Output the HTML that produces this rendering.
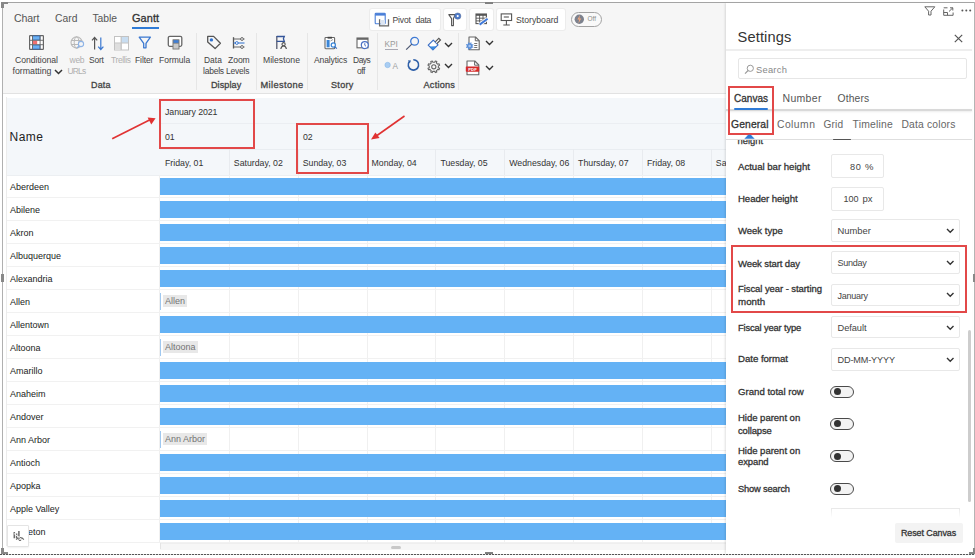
<!DOCTYPE html>
<html><head><meta charset="utf-8"><style>
html,body{margin:0;padding:0;width:975px;height:558px;overflow:hidden;background:#fff;position:relative;font-family:"Liberation Sans",sans-serif}
.t{position:absolute;white-space:nowrap;line-height:1}
svg{overflow:visible}
</style></head><body>
<div style="position:absolute;left:3px;top:3px;width:723px;height:90.5px;background:#f6f6f6"></div>
<div style="position:absolute;left:3px;top:93px;width:723px;height:1.2px;background:#e2e2e2"></div>
<div style="position:absolute;left:7px;top:97.5px;width:719px;height:77.5px;background:#f4f7fa"></div>
<div style="position:absolute;left:160px;top:122.5px;width:566px;height:1px;background:#ebeef2"></div>
<div style="position:absolute;left:160px;top:149px;width:566px;height:1px;background:#e9edf1"></div>
<div style="position:absolute;left:7px;top:174.5px;width:719px;height:1px;background:#eceff2"></div>
<div class="t" id="t0" style="left:14.00px;top:13.03px;font-size:10.592px;color:#555;font-weight:400;letter-spacing:-0.100px">Chart</div>
<div class="t" id="t1" style="left:55.00px;top:14.24px;font-size:10.344px;color:#555;font-weight:400">Card</div>
<div class="t" id="t2" style="left:92.50px;top:14.24px;font-size:10.349px;color:#555;font-weight:400;letter-spacing:-0.050px">Table</div>
<div class="t" id="t3" style="left:132.00px;top:12.74px;font-size:10.941px;color:#333;font-weight:400;-webkit-text-stroke:0.3px #333;letter-spacing:0.100px">Gantt</div>
<div style="position:absolute;left:132px;top:27px;width:27px;height:2px;background:#2f7bd6"></div>
<div class="t" id="t4" style="left:15.00px;top:56.35px;font-size:8.683px;color:#444;font-weight:400;letter-spacing:-0.040px">Conditional</div>
<div class="t" id="t5" style="left:12.50px;top:67.45px;font-size:8.803px;color:#444;font-weight:400;letter-spacing:-0.021px">formatting</div>
<div class="t" id="t6" style="left:69.54px;top:56.47px;font-size:8.546px;color:#b0b0b0;font-weight:400;letter-spacing:-0.300px">web</div>
<div class="t" id="t7" style="left:67.50px;top:66.74px;font-size:8.455px;color:#b0b0b0;font-weight:400;letter-spacing:-0.800px">URLs</div>
<div class="t" id="t8" style="left:89.00px;top:55.54px;font-size:8.455px;color:#444;font-weight:400;letter-spacing:-0.199px">Sort</div>
<div class="t" id="t9" style="left:111.00px;top:55.54px;font-size:8.455px;color:#b0b0b0;font-weight:400;letter-spacing:-0.367px">Trellis</div>
<div class="t" id="t10" style="left:135.00px;top:55.53px;font-size:8.471px;color:#444;font-weight:400;letter-spacing:-0.080px">Filter</div>
<div class="t" id="t11" style="left:159.00px;top:56.46px;font-size:8.558px;color:#444;font-weight:400;letter-spacing:-0.034px">Formula</div>
<div class="t" id="t12" style="left:91.00px;top:81.01px;font-size:8.968px;color:#444;font-weight:400;-webkit-text-stroke:0.3px #444;letter-spacing:0.200px">Data</div>
<div class="t" id="t13" style="left:204.00px;top:55.54px;font-size:8.458px;color:#444;font-weight:400">Data</div>
<div class="t" id="t14" style="left:203.00px;top:66.74px;font-size:8.455px;color:#444;font-weight:400;letter-spacing:-0.200px">labels</div>
<div class="t" id="t15" style="left:228.00px;top:56.43px;font-size:8.593px;color:#444;font-weight:400;letter-spacing:-0.066px">Zoom</div>
<div class="t" id="t16" style="left:226.00px;top:66.74px;font-size:8.455px;color:#444;font-weight:400;letter-spacing:-0.200px">Levels</div>
<div class="t" id="t17" style="left:211.00px;top:80.91px;font-size:9.088px;color:#444;font-weight:400;-webkit-text-stroke:0.3px #444;letter-spacing:0.067px">Display</div>
<div class="t" id="t18" style="left:263.00px;top:56.38px;font-size:8.652px;color:#444;font-weight:400">Milestone</div>
<div class="t" id="t19" style="left:260.50px;top:80.74px;font-size:9.285px;color:#444;font-weight:400;-webkit-text-stroke:0.3px #444;letter-spacing:0.375px">Milestone</div>
<div class="t" id="t20" style="left:314.00px;top:56.45px;font-size:8.569px;color:#444;font-weight:400;letter-spacing:-0.125px">Analytics</div>
<div class="t" id="t21" style="left:353.00px;top:55.54px;font-size:8.455px;color:#444;font-weight:400;letter-spacing:-0.467px">Days</div>
<div class="t" id="t22" style="left:357.00px;top:66.66px;font-size:8.553px;color:#444;font-weight:400;letter-spacing:-0.500px">off</div>
<div class="t" id="t23" style="left:331.00px;top:80.93px;font-size:9.061px;color:#444;font-weight:400;-webkit-text-stroke:0.3px #444;letter-spacing:0.300px">Story</div>
<div class="t" id="t24" style="left:423.50px;top:80.84px;font-size:9.163px;color:#444;font-weight:400;-webkit-text-stroke:0.3px #444;letter-spacing:0.233px">Actions</div>
<div style="position:absolute;left:196px;top:33px;width:1px;height:57px;background:#e6e6e6"></div>
<div style="position:absolute;left:256px;top:33px;width:1px;height:57px;background:#e6e6e6"></div>
<div style="position:absolute;left:307px;top:33px;width:1px;height:57px;background:#e6e6e6"></div>
<div style="position:absolute;left:377px;top:33px;width:1px;height:57px;background:#e6e6e6"></div>
<div style="position:absolute;left:458px;top:33px;width:1px;height:57px;background:#e6e6e6"></div>
<div style="position:absolute;left:370px;top:9px;width:70px;height:21px;background:#fff;border-radius:2px;box-shadow:0 0 0 1px #ececec"></div>
<div class="t" id="t25" style="left:392.50px;top:15.56px;font-size:8.556px;color:#444;font-weight:400;letter-spacing:-0.150px">Pivot</div>
<div class="t" id="t26" style="left:415.50px;top:15.53px;font-size:8.593px;color:#444;font-weight:400;letter-spacing:-0.333px">data</div>
<div style="position:absolute;left:444px;top:9px;width:22px;height:21px;background:#fff;border-radius:2px;box-shadow:0 0 0 1px #ececec"></div>
<div style="position:absolute;left:470px;top:9px;width:23px;height:21px;background:#fff;border-radius:2px;box-shadow:0 0 0 1px #ececec"></div>
<div style="position:absolute;left:497px;top:9px;width:68px;height:21px;background:#fff;border-radius:2px;box-shadow:0 0 0 1px #ececec"></div>
<div class="t" id="t27" style="left:516.00px;top:15.95px;font-size:8.687px;color:#444;font-weight:400">Storyboard</div>
<div style="position:absolute;left:571.4px;top:11.9px;width:30.7px;height:15px;border:1.3px solid #a2a2a2;border-radius:8px;background:#f9f9f9;box-sizing:border-box"></div>
<div class="t" id="t28" style="left:9.50px;top:130.83px;font-size:12.011px;color:#222;font-weight:400;letter-spacing:0.466px">Name</div>
<div class="t" id="t29" style="left:165.00px;top:107.54px;font-size:8.813px;color:#333;font-weight:400;letter-spacing:-0.074px">January 2021</div>
<div class="t" id="t30" style="left:165.00px;top:132.59px;font-size:8.750px;color:#333;font-weight:400">01</div>
<div class="t" id="t31" style="left:303.00px;top:132.59px;font-size:8.750px;color:#333;font-weight:400">02</div>
<div class="t" id="t32" style="left:165.00px;top:159.39px;font-size:8.750px;color:#333;font-weight:400">Friday, 01</div>
<div class="t" id="t33" style="left:233.85px;top:159.39px;font-size:8.750px;color:#333;font-weight:400">Saturday, 02</div>
<div style="position:absolute;left:228.85px;top:149px;width:1px;height:26px;background:#e8ebef"></div>
<div class="t" id="t34" style="left:302.70px;top:159.39px;font-size:8.750px;color:#333;font-weight:400">Sunday, 03</div>
<div style="position:absolute;left:297.7px;top:149px;width:1px;height:26px;background:#e8ebef"></div>
<div class="t" id="t35" style="left:371.55px;top:159.39px;font-size:8.750px;color:#333;font-weight:400">Monday, 04</div>
<div style="position:absolute;left:366.55px;top:149px;width:1px;height:26px;background:#e8ebef"></div>
<div class="t" id="t36" style="left:440.40px;top:159.39px;font-size:8.750px;color:#333;font-weight:400">Tuesday, 05</div>
<div style="position:absolute;left:435.4px;top:149px;width:1px;height:26px;background:#e8ebef"></div>
<div class="t" id="t37" style="left:509.25px;top:159.39px;font-size:8.750px;color:#333;font-weight:400">Wednesday, 06</div>
<div style="position:absolute;left:504.25px;top:149px;width:1px;height:26px;background:#e8ebef"></div>
<div class="t" id="t38" style="left:578.10px;top:159.39px;font-size:8.750px;color:#333;font-weight:400">Thursday, 07</div>
<div style="position:absolute;left:573.1px;top:149px;width:1px;height:26px;background:#e8ebef"></div>
<div class="t" id="t39" style="left:646.95px;top:159.39px;font-size:8.750px;color:#333;font-weight:400">Friday, 08</div>
<div style="position:absolute;left:641.95px;top:149px;width:1px;height:26px;background:#e8ebef"></div>
<div class="t" id="t40" style="left:715.80px;top:159.39px;font-size:8.750px;color:#333;font-weight:400">Saturday, 09</div>
<div style="position:absolute;left:710.8px;top:149px;width:1px;height:26px;background:#e8ebef"></div>
<div style="position:absolute;left:159px;top:175px;width:1px;height:368px;background:#f0f0f0"></div>
<div style="position:absolute;left:228.85px;top:175px;width:1px;height:368px;background:#f0f0f0"></div>
<div style="position:absolute;left:297.7px;top:175px;width:1px;height:368px;background:#f0f0f0"></div>
<div style="position:absolute;left:366.55px;top:175px;width:1px;height:368px;background:#f0f0f0"></div>
<div style="position:absolute;left:435.4px;top:175px;width:1px;height:368px;background:#f0f0f0"></div>
<div style="position:absolute;left:504.25px;top:175px;width:1px;height:368px;background:#f0f0f0"></div>
<div style="position:absolute;left:573.1px;top:175px;width:1px;height:368px;background:#f0f0f0"></div>
<div style="position:absolute;left:641.95px;top:175px;width:1px;height:368px;background:#f0f0f0"></div>
<div style="position:absolute;left:710.8px;top:175px;width:1px;height:368px;background:#f0f0f0"></div>
<div style="position:absolute;left:6px;top:197px;width:720px;height:1px;background:#f1f1f1"></div>
<div class="t" id="t41" style="left:10.00px;top:182.58px;font-size:9.000px;color:#222;font-weight:400">Aberdeen</div>
<div style="position:absolute;left:160px;top:178px;width:566px;height:17px;background:#64b2f5"></div>
<div style="position:absolute;left:6px;top:220px;width:720px;height:1px;background:#f1f1f1"></div>
<div class="t" id="t42" style="left:10.00px;top:205.58px;font-size:9.000px;color:#222;font-weight:400">Abilene</div>
<div style="position:absolute;left:160px;top:201px;width:566px;height:17px;background:#64b2f5"></div>
<div style="position:absolute;left:6px;top:243px;width:720px;height:1px;background:#f1f1f1"></div>
<div class="t" id="t43" style="left:10.00px;top:228.58px;font-size:9.000px;color:#222;font-weight:400">Akron</div>
<div style="position:absolute;left:160px;top:224px;width:566px;height:17px;background:#64b2f5"></div>
<div style="position:absolute;left:6px;top:266px;width:720px;height:1px;background:#f1f1f1"></div>
<div class="t" id="t44" style="left:10.00px;top:251.58px;font-size:9.000px;color:#222;font-weight:400">Albuquerque</div>
<div style="position:absolute;left:160px;top:247px;width:566px;height:17px;background:#64b2f5"></div>
<div style="position:absolute;left:6px;top:289px;width:720px;height:1px;background:#f1f1f1"></div>
<div class="t" id="t45" style="left:10.00px;top:274.58px;font-size:9.000px;color:#222;font-weight:400">Alexandria</div>
<div style="position:absolute;left:160px;top:270px;width:566px;height:17px;background:#64b2f5"></div>
<div style="position:absolute;left:6px;top:312px;width:720px;height:1px;background:#f1f1f1"></div>
<div class="t" id="t46" style="left:10.00px;top:297.58px;font-size:9.000px;color:#222;font-weight:400">Allen</div>
<div style="position:absolute;left:160px;top:293px;width:1px;height:17px;background:#9fc8f0"></div>
<div style="position:absolute;white-space:nowrap;left:163px;top:294.5px;font-size:9px;line-height:12.5px;padding:0 2px;background:#e8e8e8;color:#737373">Allen</div>
<div style="position:absolute;left:6px;top:335px;width:720px;height:1px;background:#f1f1f1"></div>
<div class="t" id="t47" style="left:10.00px;top:320.58px;font-size:9.000px;color:#222;font-weight:400">Allentown</div>
<div style="position:absolute;left:160px;top:316px;width:566px;height:17px;background:#64b2f5"></div>
<div style="position:absolute;left:6px;top:358px;width:720px;height:1px;background:#f1f1f1"></div>
<div class="t" id="t48" style="left:10.00px;top:343.58px;font-size:9.000px;color:#222;font-weight:400">Altoona</div>
<div style="position:absolute;left:160px;top:339px;width:1px;height:17px;background:#9fc8f0"></div>
<div style="position:absolute;white-space:nowrap;left:163px;top:340.5px;font-size:9px;line-height:12.5px;padding:0 2px;background:#e8e8e8;color:#737373">Altoona</div>
<div style="position:absolute;left:6px;top:381px;width:720px;height:1px;background:#f1f1f1"></div>
<div class="t" id="t49" style="left:10.00px;top:366.58px;font-size:9.000px;color:#222;font-weight:400">Amarillo</div>
<div style="position:absolute;left:160px;top:362px;width:566px;height:17px;background:#64b2f5"></div>
<div style="position:absolute;left:6px;top:404px;width:720px;height:1px;background:#f1f1f1"></div>
<div class="t" id="t50" style="left:10.00px;top:389.58px;font-size:9.000px;color:#222;font-weight:400">Anaheim</div>
<div style="position:absolute;left:160px;top:385px;width:566px;height:17px;background:#64b2f5"></div>
<div style="position:absolute;left:6px;top:427px;width:720px;height:1px;background:#f1f1f1"></div>
<div class="t" id="t51" style="left:10.00px;top:412.58px;font-size:9.000px;color:#222;font-weight:400">Andover</div>
<div style="position:absolute;left:160px;top:408px;width:566px;height:17px;background:#64b2f5"></div>
<div style="position:absolute;left:6px;top:450px;width:720px;height:1px;background:#f1f1f1"></div>
<div class="t" id="t52" style="left:10.00px;top:435.58px;font-size:9.000px;color:#222;font-weight:400">Ann Arbor</div>
<div style="position:absolute;left:160px;top:431px;width:1px;height:17px;background:#9fc8f0"></div>
<div style="position:absolute;white-space:nowrap;left:163px;top:432.5px;font-size:9px;line-height:12.5px;padding:0 2px;background:#e8e8e8;color:#737373">Ann Arbor</div>
<div style="position:absolute;left:6px;top:473px;width:720px;height:1px;background:#f1f1f1"></div>
<div class="t" id="t53" style="left:10.00px;top:458.58px;font-size:9.000px;color:#222;font-weight:400">Antioch</div>
<div style="position:absolute;left:160px;top:454px;width:566px;height:17px;background:#64b2f5"></div>
<div style="position:absolute;left:6px;top:496px;width:720px;height:1px;background:#f1f1f1"></div>
<div class="t" id="t54" style="left:10.00px;top:481.58px;font-size:9.000px;color:#222;font-weight:400">Apopka</div>
<div style="position:absolute;left:160px;top:477px;width:566px;height:17px;background:#64b2f5"></div>
<div style="position:absolute;left:6px;top:519px;width:720px;height:1px;background:#f1f1f1"></div>
<div class="t" id="t55" style="left:10.00px;top:504.58px;font-size:9.000px;color:#222;font-weight:400">Apple Valley</div>
<div style="position:absolute;left:160px;top:500px;width:566px;height:17px;background:#64b2f5"></div>
<div style="position:absolute;left:6px;top:542px;width:720px;height:1px;background:#f1f1f1"></div>
<div class="t" id="t56" style="left:10.00px;top:527.58px;font-size:9.000px;color:#222;font-weight:400">Appleton</div>
<div style="position:absolute;left:160px;top:523px;width:566px;height:17px;background:#64b2f5"></div>
<div style="position:absolute;left:160px;top:543px;width:566px;height:6px;background:#f6f6f6;border-top:1px solid #eeeeee"></div>
<div style="position:absolute;left:160px;top:543px;width:1px;height:6px;background:#e4e4e4"></div>
<div style="position:absolute;left:391px;top:545.5px;width:10px;height:3px;background:#c8c8c8;border-radius:2px"></div>
<div style="position:absolute;left:7.3px;top:524.5px;width:21.5px;height:22px;background:#fff;border:1px solid #e4e4e4;box-sizing:border-box;border-radius:1px;box-shadow:0 1px 2px rgba(0,0,0,.06)"></div>
<div style="position:absolute;left:726px;top:3px;width:246px;height:551px;background:#fff;box-shadow:-1px 0 2px rgba(0,0,0,.12)"></div>
<div class="t" id="t57" style="left:737.50px;top:30.40px;font-size:14.649px;color:#333;font-weight:400;letter-spacing:0.143px">Settings</div>
<div style="position:absolute;left:726px;top:49px;width:246px;height:1.5px;background:#eeeeee"></div>
<div style="position:absolute;left:738px;top:58px;width:229px;height:20.5px;border:1px solid #e6e6e6;border-radius:2px;box-sizing:border-box;background:#fff"></div>
<div class="t" id="t58" style="left:756.00px;top:65.67px;font-size:9.371px;color:#888;font-weight:400;letter-spacing:0.240px">Search</div>
<div class="t" id="t59" style="left:734.00px;top:94.33px;font-size:10.010px;color:#333;font-weight:400;-webkit-text-stroke:0.3px #333;letter-spacing:0.040px">Canvas</div>
<div class="t" id="t60" style="left:782.50px;top:93.91px;font-size:10.497px;color:#555;font-weight:400;letter-spacing:0.320px">Number</div>
<div class="t" id="t61" style="left:837.50px;top:94.08px;font-size:10.300px;color:#555;font-weight:400;letter-spacing:0.160px">Others</div>
<div style="position:absolute;left:726px;top:109px;width:246px;height:1.5px;background:#d9d9d9;box-shadow:0 1px 2px rgba(0,0,0,.08)"></div>
<div style="position:absolute;left:734px;top:108.3px;width:34px;height:2.2px;background:#2f7bd6;border-radius:1px"></div>
<div class="t" id="t62" style="left:731.00px;top:120.36px;font-size:10.324px;color:#333;font-weight:400;-webkit-text-stroke:0.3px #333;letter-spacing:0.133px">General</div>
<div class="t" id="t63" style="left:777.00px;top:120.32px;font-size:10.367px;color:#666;font-weight:400;letter-spacing:0.440px">Column</div>
<div class="t" id="t64" style="left:823.50px;top:119.51px;font-size:10.153px;color:#666;font-weight:400;letter-spacing:0.133px">Grid</div>
<div class="t" id="t65" style="left:852.50px;top:120.30px;font-size:10.392px;color:#666;font-weight:400;letter-spacing:0.201px">Timeline</div>
<div class="t" id="t66" style="left:901.50px;top:120.38px;font-size:10.307px;color:#666;font-weight:400;letter-spacing:0.180px">Data colors</div>
<div class="t" id="t67" style="left:738.00px;top:162.03px;font-size:9.656px;color:#333;font-weight:400;-webkit-text-stroke:0.3px #333;letter-spacing:-0.027px">Actual bar height</div>
<div class="t" id="t68" style="left:738.00px;top:194.26px;font-size:9.620px;color:#333;font-weight:400;-webkit-text-stroke:0.3px #333;letter-spacing:-0.066px">Header height</div>
<div class="t" id="t69" style="left:738.00px;top:225.84px;font-size:9.519px;color:#333;font-weight:400;-webkit-text-stroke:0.3px #333;letter-spacing:0.002px">Week type</div>
<div class="t" id="t70" style="left:738.00px;top:259.40px;font-size:9.566px;color:#333;font-weight:400;-webkit-text-stroke:0.3px #333;letter-spacing:-0.122px">Week start day</div>
<div class="t" id="t71" style="left:738.00px;top:284.25px;font-size:9.510px;color:#333;font-weight:400;-webkit-text-stroke:0.3px #333;letter-spacing:-0.075px">Fiscal year - starting</div>
<div class="t" id="t72" style="left:738.00px;top:297.37px;font-size:9.720px;color:#333;font-weight:400;-webkit-text-stroke:0.3px #333;letter-spacing:0.050px">month</div>
<div class="t" id="t73" style="left:738.00px;top:323.66px;font-size:9.381px;color:#333;font-weight:400;-webkit-text-stroke:0.3px #333;letter-spacing:-0.160px">Fiscal year type</div>
<div class="t" id="t74" style="left:738.00px;top:354.01px;font-size:9.674px;color:#333;font-weight:400;-webkit-text-stroke:0.3px #333;letter-spacing:-0.040px">Date format</div>
<div class="t" id="t75" style="left:738.00px;top:386.82px;font-size:9.665px;color:#333;font-weight:400;-webkit-text-stroke:0.3px #333;letter-spacing:-0.015px">Grand total row</div>
<div class="t" id="t76" style="left:738.00px;top:413.28px;font-size:9.593px;color:#333;font-weight:400;-webkit-text-stroke:0.3px #333;letter-spacing:-0.047px">Hide parent on</div>
<div class="t" id="t77" style="left:738.00px;top:425.62px;font-size:9.430px;color:#333;font-weight:400;-webkit-text-stroke:0.3px #333;letter-spacing:-0.114px">collapse</div>
<div class="t" id="t78" style="left:738.00px;top:445.78px;font-size:9.593px;color:#333;font-weight:400;-webkit-text-stroke:0.3px #333;letter-spacing:-0.047px">Hide parent on</div>
<div class="t" id="t79" style="left:738.00px;top:457.30px;font-size:9.452px;color:#333;font-weight:400;-webkit-text-stroke:0.3px #333;letter-spacing:-0.080px">expand</div>
<div class="t" id="t80" style="left:738.00px;top:484.81px;font-size:9.326px;color:#333;font-weight:400;-webkit-text-stroke:0.3px #333;letter-spacing:-0.180px">Show search</div>
<div style="position:absolute;left:831px;top:154px;width:53px;height:24px;border:1px solid #e8e8e8;box-sizing:border-box;background:#fff;border-radius:2px"></div>
<div class="t" id="t81" style="left:850.00px;top:162.91px;font-size:9.205px;color:#444;font-weight:400;letter-spacing:0.600px">80</div>
<div class="t" id="t82" style="left:865.00px;top:161.66px;font-size:9.500px;color:#444;font-weight:400">%</div>
<div style="position:absolute;left:831px;top:186.5px;width:53px;height:24px;border:1px solid #e8e8e8;box-sizing:border-box;background:#fff;border-radius:2px"></div>
<div class="t" id="t83" style="left:843.50px;top:194.66px;font-size:9.025px;color:#444;font-weight:400">100</div>
<div class="t" id="t84" style="left:862.50px;top:194.26px;font-size:9.500px;color:#444;font-weight:400">px</div>
<div style="position:absolute;left:830.6px;top:218.5px;width:129px;height:23.8px;border:1px solid #e8e8e8;box-sizing:border-box;background:#fff;border-radius:2px"></div>
<div class="t" id="t85" style="left:837.50px;top:225.95px;font-size:9.391px;color:#444;font-weight:400">Number</div>
<div style="position:absolute;left:830.6px;top:250.8px;width:129px;height:23.3px;border:1px solid #e8e8e8;box-sizing:border-box;background:#fff;border-radius:2px"></div>
<div class="t" id="t86" style="left:837.50px;top:258.72px;font-size:9.077px;color:#444;font-weight:400;letter-spacing:-0.280px">Sunday</div>
<div style="position:absolute;left:830.6px;top:283.5px;width:129px;height:22.5px;border:1px solid #e8e8e8;box-sizing:border-box;background:#fff;border-radius:2px"></div>
<div class="t" id="t87" style="left:837.50px;top:291.95px;font-size:9.036px;color:#444;font-weight:400;letter-spacing:-0.267px">January</div>
<div style="position:absolute;left:830.6px;top:316.1px;width:129px;height:22.1px;border:1px solid #e8e8e8;box-sizing:border-box;background:#fff;border-radius:2px"></div>
<div class="t" id="t88" style="left:837.50px;top:323.62px;font-size:9.306px;color:#444;font-weight:400;letter-spacing:-0.067px">Default</div>
<div style="position:absolute;left:830.6px;top:347.6px;width:129px;height:23.3px;border:1px solid #e8e8e8;box-sizing:border-box;background:#fff;border-radius:2px"></div>
<div class="t" id="t89" style="left:837.50px;top:355.95px;font-size:9.158px;color:#444;font-weight:400;letter-spacing:-0.155px">DD-MM-YYYY</div>
<div style="position:absolute;left:830.4px;top:385.5px;width:23.4px;height:12.4px;border:1.2px solid #4a4a4a;border-radius:7px;box-sizing:border-box;background:#f3f3f3"></div>
<div style="position:absolute;left:834.3px;top:388.2px;width:7px;height:7px;background:#333;border-radius:50%"></div>
<div style="position:absolute;left:830.4px;top:417.5px;width:23.4px;height:12.4px;border:1.2px solid #4a4a4a;border-radius:7px;box-sizing:border-box;background:#f3f3f3"></div>
<div style="position:absolute;left:834.3px;top:420.2px;width:7px;height:7px;background:#333;border-radius:50%"></div>
<div style="position:absolute;left:830.4px;top:449.8px;width:23.4px;height:12.4px;border:1.2px solid #4a4a4a;border-radius:7px;box-sizing:border-box;background:#f3f3f3"></div>
<div style="position:absolute;left:834.3px;top:452.5px;width:7px;height:7px;background:#333;border-radius:50%"></div>
<div style="position:absolute;left:830.4px;top:482.5px;width:23.4px;height:12.4px;border:1.2px solid #4a4a4a;border-radius:7px;box-sizing:border-box;background:#f3f3f3"></div>
<div style="position:absolute;left:834.3px;top:485.2px;width:7px;height:7px;background:#333;border-radius:50%"></div>
<div style="position:absolute;left:831px;top:507.5px;width:129px;height:10px;border:1px solid #e8e8e8;border-bottom:none;box-sizing:border-box;-webkit-mask-image:linear-gradient(#000,transparent)"></div>
<div style="position:absolute;left:894.5px;top:522.5px;width:68.5px;height:20.5px;background:#f3f3f3;border-radius:2px"></div>
<div class="t" id="t90" style="left:901.00px;top:529.43px;font-size:8.942px;color:#333;font-weight:400;-webkit-text-stroke:0.3px #333;letter-spacing:-0.091px">Reset Canvas</div>
<div style="position:absolute;left:967.5px;top:330px;width:3.5px;height:172px;background:#cdcdcd;border-radius:2px"></div>
<div style="position:absolute;left:159px;top:98.5px;width:96px;height:50.5px;border:2px solid #e24848;box-sizing:border-box"></div>
<div style="position:absolute;left:296px;top:123px;width:72.5px;height:50.5px;border:2px solid #e24848;box-sizing:border-box"></div>
<div style="position:absolute;left:728px;top:85.5px;width:45.5px;height:49px;border:2px solid #e24848;box-sizing:border-box"></div>
<div style="position:absolute;left:730.5px;top:245px;width:236.5px;height:68px;border:2px solid #e24848;box-sizing:border-box"></div>
<div style="position:absolute;left:2px;top:2px;width:972px;height:1.2px;background:#a4a4a4"></div>
<div style="position:absolute;left:2px;top:2px;width:1.2px;height:552px;background:#b0b0b0"></div>
<div style="position:absolute;left:973.6px;top:2px;width:1.4px;height:552px;background:#b4b4b4"></div>
<div style="position:absolute;left:6px;top:97px;width:1px;height:449px;background:#ececec"></div>
<div style="position:absolute;left:0px;top:553.5px;width:975px;height:1.6px;background:repeating-linear-gradient(90deg,#555 0 1.6px,#dcdcdc 1.6px 3px)"></div>
<div style="position:absolute;left:1.2px;top:2px;width:2.6px;height:5.8px;background:#888"></div>
<div style="position:absolute;left:1.2px;top:2px;width:6.7px;height:1.8px;background:#888"></div>
<div style="position:absolute;left:1.2px;top:548px;width:2.6px;height:5.5px;background:#888"></div>
<div style="position:absolute;left:1.2px;top:552px;width:6.7px;height:1.5px;background:#888"></div>
<div style="position:absolute;left:972.8px;top:548px;width:2.2px;height:5.5px;background:#888"></div>
<div style="position:absolute;left:969px;top:552px;width:6px;height:1.5px;background:#888"></div>
<div style="position:absolute;left:1.2px;top:274px;width:2.6px;height:7.8px;background:#888"></div>
<div style="position:absolute;left:972.8px;top:274px;width:2.2px;height:7.8px;background:#888"></div>
<div style="position:absolute;left:484.5px;top:2px;width:8px;height:1.8px;background:#808080"></div>
<div style="position:absolute;left:484.5px;top:552px;width:8px;height:1.8px;background:#808080"></div>
<svg style="position:absolute;left:29px;top:35px;" width="15" height="15" viewBox="0 0 15 15"><rect x="0.6" y="0.6" width="13.8" height="13.8" rx="0.6" fill="#fff" stroke="#666" stroke-width="1.2"/>
<rect x="3.6" y="1" width="7.4" height="4" fill="#6ab0f2" stroke="#2f6cc0" stroke-width="0.7"/>
<rect x="3.6" y="10" width="7.4" height="4" fill="#6ab0f2" stroke="#2f6cc0" stroke-width="0.7"/>
<rect x="3.6" y="5.6" width="4.6" height="3.8" fill="#f07070"/>
<path d="M0.6 5.3H14.4M0.6 9.7H14.4M3.5 0.6V14.4M11.1 0.6V14.4" stroke="#666" stroke-width="0.9"/></svg>
<svg style="position:absolute;left:53.5px;top:69px;" width="9" height="6" viewBox="0 0 9 6"><path d="M1 1L4.5 4.5L8 1" fill="none" stroke="#333" stroke-width="1.5"/></svg>
<svg style="position:absolute;left:70px;top:36px;" width="15" height="14" viewBox="0 0 15 14"><circle cx="6.6" cy="6.5" r="5.6" fill="none" stroke="#b8b8b8" stroke-width="1.1"/>
<ellipse cx="6.6" cy="6.5" rx="2.4" ry="5.6" fill="none" stroke="#b8b8b8" stroke-width="1"/>
<path d="M1 4.5H12.2M1 8.5H12.2" stroke="#b8b8b8" stroke-width="1"/>
<circle cx="11" cy="8" r="2.6" fill="#f5f5f5" stroke="#8fb4e6" stroke-width="1.1"/>
<path d="M9.2 9.8L7.2 12" stroke="#8fb4e6" stroke-width="1.2"/></svg>
<svg style="position:absolute;left:91px;top:36px;" width="14" height="15" viewBox="0 0 14 15"><path d="M3.6 1.5V13.5M1 4.3L3.6 1.5L6.2 4.3" fill="none" stroke="#555" stroke-width="1.2"/>
<path d="M9.8 1.5V13.5M7.2 10.7L9.8 13.5L12.4 10.7" fill="none" stroke="#3b78d0" stroke-width="1.2"/></svg>
<svg style="position:absolute;left:113.5px;top:35.5px;" width="15" height="14.5" viewBox="0 0 15 14.5"><rect x="0.5" y="0.5" width="14" height="13.5" fill="#fff" stroke="#c2c2c2" stroke-width="1"/>
<rect x="7.3" y="1" width="6.7" height="5.9" fill="#c8ddf1"/>
<rect x="1" y="7.2" width="6.3" height="6.3" fill="#dedede"/>
<path d="M7.2 0.5V14M0.5 7H14.5" stroke="#c2c2c2" stroke-width="1.2"/></svg>
<svg style="position:absolute;left:137.5px;top:36px;" width="14" height="13" viewBox="0 0 14 13"><path d="M1.2 1.2H12.4L8 7.4V11.8L5.7 11.8V7.4Z" fill="none" stroke="#3b78d0" stroke-width="1.3" stroke-linejoin="round"/></svg>
<svg style="position:absolute;left:166.5px;top:35px;" width="16" height="15" viewBox="0 0 16 15"><rect x="1.3" y="1.3" width="13.5" height="10" rx="1.5" fill="#fff" stroke="#666" stroke-width="1.3"/>
<rect x="5.5" y="4.2" width="7" height="10.3" rx="0.6" fill="#7a7a7a"/>
<rect x="6.5" y="5.2" width="5" height="2.6" fill="#3f7fd8"/>
<rect x="6.5" y="8.6" width="5" height="5" fill="#c9c9c9"/></svg>
<svg style="position:absolute;left:205.5px;top:35px;" width="16" height="15" viewBox="0 0 16 15"><path d="M1.7 1.4H7.6L14.4 8.3L9.1 13.6L1.7 6.9Z" fill="none" stroke="#555" stroke-width="1.3" stroke-linejoin="round"/>
<circle cx="5.4" cy="4.9" r="1.7" fill="#2f72d0"/></svg>
<svg style="position:absolute;left:232px;top:35.5px;" width="14" height="14" viewBox="0 0 14 14"><path d="M1.5 1.2V12.5" stroke="#555" stroke-width="1.3"/>
<path d="M1.5 3H12.5M1.5 11H12.5" stroke="#666" stroke-width="1.1"/>
<path d="M1.5 7H12.5" stroke="#3b78d0" stroke-width="1.1"/>
<circle cx="10" cy="3" r="1.4" fill="#fff" stroke="#666" stroke-width="1"/>
<circle cx="10" cy="11" r="1.4" fill="#fff" stroke="#666" stroke-width="1"/>
<circle cx="4.8" cy="7" r="1.4" fill="#fff" stroke="#3b78d0" stroke-width="1"/></svg>
<svg style="position:absolute;left:275px;top:35px;" width="14" height="15" viewBox="0 0 14 15"><path d="M1.8 1V14" stroke="#555a70" stroke-width="1.3"/>
<path d="M1.8 1.5H9.3L8.4 3.8L9.3 6.3H1.8" fill="none" stroke="#34559a" stroke-width="1.3"/>
<circle cx="8.6" cy="9.2" r="1.6" fill="none" stroke="#555" stroke-width="1.1"/>
<path d="M5.8 14C6.2 11.8 7.3 11 8.6 11C9.9 11 11 11.8 11.4 14" fill="none" stroke="#555" stroke-width="1.2"/></svg>
<svg style="position:absolute;left:323.5px;top:36px;" width="14" height="14" viewBox="0 0 14 14"><rect x="1" y="1.5" width="9.6" height="11.2" rx="0.8" fill="#fff" stroke="#666" stroke-width="1.1"/>
<rect x="3.6" y="0.8" width="4.4" height="1.8" fill="#444"/>
<rect x="2.6" y="4" width="3" height="7.3" fill="#3a86d8"/>
<path d="M6.5 5L9 3.5" stroke="#999" stroke-width="1"/>
<circle cx="9.3" cy="9" r="2.1" fill="#fff" stroke="#3a86d8" stroke-width="1.2"/>
<path d="M10.8 10.6L12.8 12.6" stroke="#3a6ec0" stroke-width="1.2"/></svg>
<svg style="position:absolute;left:355.5px;top:36.5px;" width="14" height="14" viewBox="0 0 14 14"><rect x="1" y="1" width="11" height="9.8" fill="#fff" stroke="#666" stroke-width="1.1"/>
<rect x="1" y="1" width="11" height="1.8" fill="#666"/>
<circle cx="8.8" cy="8.1" r="3.5" fill="#fff" stroke="#4a70c4" stroke-width="1.2"/>
<path d="M8.8 6.2V8.3L10 9.2" fill="none" stroke="#4a70c4" stroke-width="1"/></svg>
<div class="t" id="t91" style="left:384.50px;top:39.67px;font-size:8.300px;color:#9a9a9a;font-weight:400letter-spacing:0.4px">KPI</div>
<div style="position:absolute;left:384.5px;top:49px;width:13.5px;height:1.2px;background:#a9a9b3"></div>
<svg style="position:absolute;left:405px;top:35.5px;" width="15" height="15" viewBox="0 0 15 15"><circle cx="9.6" cy="5.3" r="3.9" fill="none" stroke="#3f7ad4" stroke-width="1.3"/>
<path d="M6.8 8.1L1.2 13.7" stroke="#4a5570" stroke-width="1.2"/></svg>
<svg style="position:absolute;left:427px;top:37px;" width="15" height="15" viewBox="0 0 15 15"><path d="M1.2 8.2L6.3 3.1L11 7.8L5.9 12.9Z" fill="#fff" stroke="#3b6fc6" stroke-width="1.2" stroke-linejoin="round"/>
<path d="M2.6 9.5L9.6 9.2L5.9 12.9Z" fill="#3b8ae0"/>
<path d="M8.3 4.8L11.8 1.3L13.5 3L10 6.5" fill="#fff" stroke="#555" stroke-width="1.1"/></svg>
<svg style="position:absolute;left:444px;top:42px;" width="9" height="6" viewBox="0 0 9 6"><path d="M1 1L4.5 4.5L8 1" fill="none" stroke="#333" stroke-width="1.4"/></svg>
<svg style="position:absolute;left:384px;top:61px;" width="8" height="8" viewBox="0 0 8 8"><circle cx="3.6" cy="4" r="2.7" fill="#a9cdf2" stroke="#8ab8ea" stroke-width="0.6"/></svg>
<div class="t" id="t92" style="left:392.50px;top:62.76px;font-size:8.200px;color:#a0a0a0;font-weight:400">A</div>
<svg style="position:absolute;left:406px;top:57.5px;" width="15" height="15" viewBox="0 0 15 15"><path d="M3.4 3.6A5.2 5.2 0 1 0 7.3 1.7" fill="none" stroke="#2e5fa8" stroke-width="1.6"/>
<path d="M2 2.2L5 2.6L3.8 5.3Z" fill="#2e5fa8"/></svg>
<svg style="position:absolute;left:427px;top:59.5px;" width="14" height="14" viewBox="0 0 14 14"><path d="M11.40 6.80L11.31 7.70L12.60 8.34L11.99 9.81L10.62 9.36L10.05 10.05L9.36 10.62L9.81 11.99L8.34 12.60L7.70 11.31L6.80 11.40L5.90 11.31L5.26 12.60L3.79 11.99L4.24 10.62L3.55 10.05L2.98 9.36L1.61 9.81L1.00 8.34L2.29 7.70L2.20 6.80L2.29 5.90L1.00 5.26L1.61 3.79L2.98 4.24L3.55 3.55L4.24 2.98L3.79 1.61L5.26 1.00L5.90 2.29L6.80 2.20L7.70 2.29L8.34 1.00L9.81 1.61L9.36 2.98L10.05 3.55L10.62 4.24L11.99 3.79L12.60 5.26L11.31 5.90Z" fill="none" stroke="#666" stroke-width="1.1" stroke-linejoin="round"/>
<circle cx="6.8" cy="6.8" r="2.1" fill="none" stroke="#666" stroke-width="1.1"/></svg>
<svg style="position:absolute;left:444px;top:63px;" width="9" height="6" viewBox="0 0 9 6"><path d="M1 1L4.5 4.5L8 1" fill="none" stroke="#333" stroke-width="1.4"/></svg>
<svg style="position:absolute;left:465px;top:35.5px;" width="16" height="15" viewBox="0 0 16 15"><path d="M4 1H10.5L14.2 4.6V13.8H4Z" fill="#fff" stroke="#666" stroke-width="1.1" stroke-linejoin="round"/>
<path d="M10.3 1V4.8H14.2" fill="none" stroke="#666" stroke-width="1"/>
<path d="M9.2 7.5H12.3M9.2 9.5H12.3M9.2 11.5H12.3" stroke="#666" stroke-width="0.9"/>
<path d="M7.60 10.00L7.53 10.62L8.45 11.07L8.11 11.89L7.14 11.56L6.75 12.05L6.26 12.44L6.59 13.41L5.77 13.75L5.32 12.83L4.70 12.90L4.08 12.83L3.63 13.75L2.81 13.41L3.14 12.44L2.65 12.05L2.26 11.56L1.29 11.89L0.95 11.07L1.87 10.62L1.80 10.00L1.87 9.38L0.95 8.93L1.29 8.11L2.26 8.44L2.65 7.95L3.14 7.56L2.81 6.59L3.63 6.25L4.08 7.17L4.70 7.10L5.32 7.17L5.77 6.25L6.59 6.59L6.26 7.56L6.75 7.95L7.14 8.44L8.11 8.11L8.45 8.93L7.53 9.38Z" fill="#5b8fd8"/>
<circle cx="4.7" cy="10" r="1.3" fill="#a9c6ef"/></svg>
<svg style="position:absolute;left:485px;top:40px;" width="9" height="6" viewBox="0 0 9 6"><path d="M1 1L4.5 4.5L8 1" fill="none" stroke="#333" stroke-width="1.4"/></svg>
<svg style="position:absolute;left:465px;top:60px;" width="16" height="16" viewBox="0 0 16 16"><path d="M2 1H9.8L13.8 5V14.8H2Z" fill="#fff" stroke="#666" stroke-width="1.1" stroke-linejoin="round"/>
<path d="M9.6 1V5.2H13.8" fill="none" stroke="#666" stroke-width="1"/>
<rect x="0.8" y="6.5" width="13.4" height="5.2" rx="0.6" fill="#d42b2b"/>
<text x="7.5" y="10.7" font-size="4.2" font-family="Liberation Sans" font-weight="700" fill="#fff" text-anchor="middle">PDF</text></svg>
<svg style="position:absolute;left:485px;top:65px;" width="9" height="6" viewBox="0 0 9 6"><path d="M1 1L4.5 4.5L8 1" fill="none" stroke="#333" stroke-width="1.4"/></svg>
<svg style="position:absolute;left:373.5px;top:11.5px;" width="16" height="16" viewBox="0 0 16 16"><rect x="1.2" y="1.2" width="10" height="10.6" rx="0.8" fill="#fff" stroke="#4a7fd8" stroke-width="1.1"/>
<rect x="1.2" y="1.2" width="10" height="2.4" fill="#4a7fd8"/>
<path d="M5.6 7.2V13.8H14.5V7.2" fill="none" stroke="#666" stroke-width="1.3"/>
<rect x="6.5" y="8" width="4.5" height="4.8" fill="#dde6f3"/></svg>
<svg style="position:absolute;left:447px;top:12px;" width="16" height="16" viewBox="0 0 16 16"><path d="M1.8 2.6H8.4L6.4 6.6V13.6L4.6 13.6V6.6Z" fill="none" stroke="#555" stroke-width="1.1" stroke-linejoin="round"/>
<circle cx="10.7" cy="4.1" r="3.2" fill="#4a78c8" stroke="#5d6f95" stroke-width="0.5"/>
<circle cx="10.7" cy="4.1" r="1.1" fill="#fff"/></svg>
<svg style="position:absolute;left:474.5px;top:13px;" width="15" height="13" viewBox="0 0 15 13"><rect x="1" y="1" width="10.4" height="9.6" fill="none" stroke="#555" stroke-width="1.1"/>
<rect x="1" y="1" width="10.4" height="1.8" fill="#555"/>
<path d="M4.6 1V10.6M8 1V10.6M1 5.2H11.4M1 7.9H11.4" stroke="#555" stroke-width="0.9"/>
<path d="M4.5 11.8L12.8 5.6" stroke="#fff" stroke-width="3.6"/>
<path d="M4.6 11.6L12.6 5.8" stroke="#3f78d8" stroke-width="2"/></svg>
<svg style="position:absolute;left:500px;top:12.5px;" width="13" height="13" viewBox="0 0 13 13"><rect x="1.2" y="0.9" width="10.4" height="6.6" fill="none" stroke="#555" stroke-width="1.1"/>
<path d="M3.8 4H8.9" stroke="#555" stroke-width="1.1"/>
<path d="M6.4 7.5V12M3.3 12H9.8" stroke="#555" stroke-width="1.1"/></svg>
<svg style="position:absolute;left:574px;top:14.3px;" width="11" height="11" viewBox="0 0 11 11"><circle cx="5.3" cy="5.2" r="4.7" fill="#7d828e"/>
<path d="M6 0.9L3.4 5.6H5.3L4.3 9.6L7.3 4.6H5.4Z" fill="#f3a77c"/></svg>
<div style="position:absolute;left:587.6px;top:16px;font-size:6.4px;line-height:1;color:#8c8c8c;white-space:nowrap">Off</div>
<svg style="position:absolute;left:923.5px;top:5.5px;" width="12" height="10" viewBox="0 0 12 10"><path d="M0.8 0.8H10.8L7 5.2V9H4.6V5.2Z" fill="none" stroke="#666" stroke-width="1" stroke-linejoin="round"/></svg>
<svg style="position:absolute;left:942.5px;top:6.5px;" width="11" height="9" viewBox="0 0 11 9"><path d="M0.7 2.5V8.3H10.1V5.5" fill="none" stroke="#666" stroke-width="1"/>
<path d="M0.7 5.5H4.5V8.3" fill="none" stroke="#666" stroke-width="1"/>
<path d="M0.7 0.8H4.5M6 4.5L9.8 0.8M7 0.8H9.8V3.5" fill="none" stroke="#666" stroke-width="1"/></svg>
<svg style="position:absolute;left:960px;top:8px;" width="12" height="5" viewBox="0 0 12 5"><circle cx="2.4" cy="2.5" r="1" fill="#555"/><circle cx="6.3" cy="2.5" r="1" fill="#555"/><circle cx="10.2" cy="2.5" r="1" fill="#555"/></svg>
<svg style="position:absolute;left:953.5px;top:33.5px;" width="9" height="9" viewBox="0 0 9 9"><path d="M0.8 0.8L8.2 8.2M8.2 0.8L0.8 8.2" stroke="#555" stroke-width="1.2"/></svg>
<svg style="position:absolute;left:743.5px;top:63.5px;" width="11" height="11" viewBox="0 0 11 11"><circle cx="6.3" cy="4.3" r="3.1" fill="none" stroke="#999" stroke-width="1"/><path d="M4.1 6.5L1 9.7" stroke="#999" stroke-width="1.1"/></svg>
<svg style="position:absolute;left:946px;top:227.5px;" width="9" height="6" viewBox="0 0 9 6"><path d="M1 1L4.25 4.2L7.5 1" fill="none" stroke="#333" stroke-width="1.4"/></svg>
<svg style="position:absolute;left:946px;top:259.8px;" width="9" height="6" viewBox="0 0 9 6"><path d="M1 1L4.25 4.2L7.5 1" fill="none" stroke="#333" stroke-width="1.4"/></svg>
<svg style="position:absolute;left:946px;top:292.3px;" width="9" height="6" viewBox="0 0 9 6"><path d="M1 1L4.25 4.2L7.5 1" fill="none" stroke="#333" stroke-width="1.4"/></svg>
<svg style="position:absolute;left:946px;top:324.8px;" width="9" height="6" viewBox="0 0 9 6"><path d="M1 1L4.25 4.2L7.5 1" fill="none" stroke="#333" stroke-width="1.4"/></svg>
<svg style="position:absolute;left:946px;top:356.7px;" width="9" height="6" viewBox="0 0 9 6"><path d="M1 1L4.25 4.2L7.5 1" fill="none" stroke="#333" stroke-width="1.4"/></svg>
<svg style="position:absolute;left:12.5px;top:530px;" width="12" height="11" viewBox="0 0 12 11"><path d="M1.3 2V8.2M3.6 3.5V8.2M5.9 1V6.5" stroke="#6a6a6a" stroke-width="1.5"/>
<path d="M3.2 9.6C4.6 7.2 9 6.8 10.8 9.6" fill="none" stroke="#6a6a6a" stroke-width="1.1"/>
<circle cx="7" cy="9.3" r="1.3" fill="none" stroke="#6a6a6a" stroke-width="1"/>
<path d="M1 3.5L10 10.5" stroke="#fff" stroke-width="0.9"/></svg>
<svg style="position:absolute;left:108px;top:114px;" width="50" height="28" viewBox="0 0 50 28"><path d="M4.2 24.7L42 5.8" stroke="#e03232" stroke-width="1.6"/>
<path d="M47.6 4.3L39.6 3.5L43.3 10.6Z" fill="#e03232"/></svg>
<svg style="position:absolute;left:368px;top:113px;" width="40" height="30" viewBox="0 0 40 30"><path d="M36.5 3L9 22.5" stroke="#e03232" stroke-width="1.6"/>
<path d="M3 26.6L7.4 19.4L11.6 25Z" fill="#e03232"/></svg>
<div style="position:absolute;left:726px;top:139px;width:246px;height:8px;overflow:hidden"><div style="position:absolute;left:11.5px;top:-3.4px;font-size:9.4px;line-height:1;white-space:nowrap;color:#333;-webkit-text-stroke:0.25px #333">height</div></div>
<div style="position:absolute;left:726px;top:138.5px;width:246px;height:1px;background:#dedede"></div>
<div style="position:absolute;left:833px;top:138.6px;width:18px;height:1.5px;background:#555;border-radius:1px"></div>
<svg style="position:absolute;left:744px;top:134.2px;" width="11" height="5" viewBox="0 0 11 5"><path d="M0.3 4.8L3.8 1.2Q5.5 -0.3 7.2 1.2L10.7 4.8Z" fill="#2f7bd6"/></svg>
</body></html>
